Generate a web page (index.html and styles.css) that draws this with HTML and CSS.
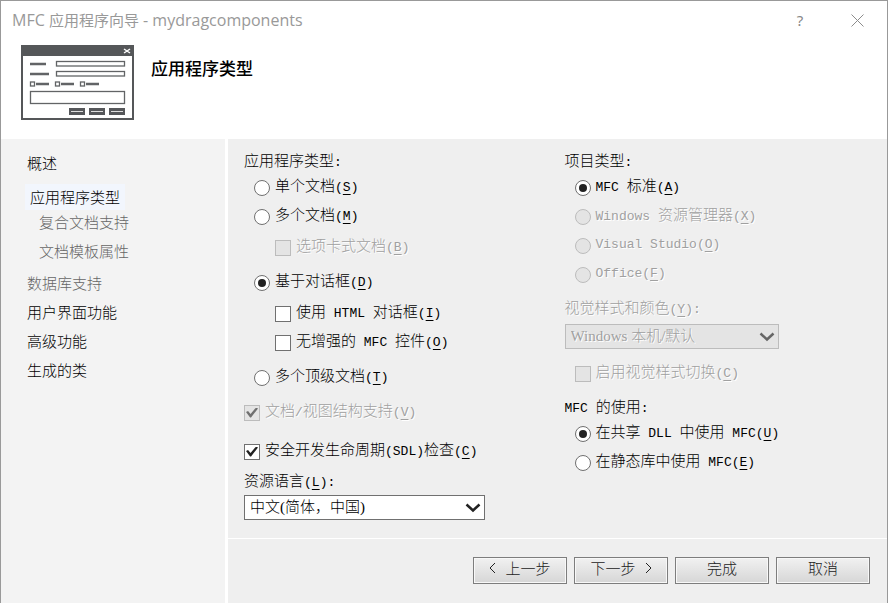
FILE: index.html
```html
<!DOCTYPE html>
<html lang="zh-CN">
<head>
<meta charset="utf-8">
<title>MFC 应用程序向导 - mydragcomponents</title>
<link rel="stylesheet" href="styles.css">
</head>
<body>
<div class="dialog">
  <header class="top">
    <div class="titlebar">
      <span class="caption">MFC <span class="zh">应用程序向导</span> - mydragcomponents</span>
      <button class="tool help" type="button" aria-label="帮助">?</button>
      <button class="tool" type="button" aria-label="关闭">
        <svg width="13" height="13" viewBox="0 0 13 13"><path d="M.5 .5l12 12M12.500 .5l-12 12" stroke="#8c8c8c" fill="none"/></svg>
      </button>
    </div>
    <div class="banner">
      <svg width="113" height="75" viewBox="0 0 113 75" aria-hidden="true">
        <rect x="1" y="1" width="111" height="73" fill="#fff" stroke="#555759" stroke-width="2"/>
        <rect width="113" height="11" fill="#555759"/>
        <path d="M103 4l6 4M109 4l-6 4" stroke="#fff" stroke-width="1.500"/>
        <path d="M9 19h16M9 29h19M15 39h13M40 39h13M65 39h13" stroke="#626466" stroke-width="2.500"/>
        <g fill="#fff" stroke="#626466" stroke-width="1.300">
          <rect x="35.500" y="16.500" width="68" height="4.500"/>
          <rect x="35.500" y="26.500" width="68" height="4.500"/>
          <rect x="9.500" y="37" width="4" height="4"/>
          <rect x="34.500" y="37" width="4" height="4"/>
          <rect x="59.500" y="37" width="4" height="4"/>
          <rect x="9.500" y="46.500" width="94" height="12"/>
        </g>
        <g fill="#55575a"><rect x="48" y="63" width="16" height="7"/><rect x="68" y="63" width="16" height="7"/><rect x="88" y="63" width="16" height="7"/></g>
        <path d="M50 66.500h12M70 66.500h12M90 66.500h12" stroke="#ddd"/>
      </svg>
      <h1>应用程序类型</h1>
    </div>
  </header>

  <div class="body">
    <nav class="side">
      <a href="#" class="item">概述</a>
      <a href="#" class="item active">应用程序类型</a>
      <a href="#" class="item sub">复合文档支持</a>
      <a href="#" class="item sub">文档模板属性</a>
      <a href="#" class="item off">数据库支持</a>
      <a href="#" class="item">用户界面功能</a>
      <a href="#" class="item">高级功能</a>
      <a href="#" class="item">生成的类</a>
    </nav>

    <form class="main">
      <div class="columns">
        <section>
          <div class="label">应用程序类型<span class="en">:</span></div>
          <label class="row in"><input type="radio" name="app"><span>单个文档<span class="en">(<u>S</u>)</span></span></label>
          <label class="row in"><input type="radio" name="app"><span>多个文档<span class="en">(<u>M</u>)</span></span></label>
          <label class="row deep off gap-s"><input type="checkbox" disabled><span>选项卡式文档<span class="en">(<u>B</u>)</span></span></label>
          <label class="row in gap-m"><input type="radio" name="app" checked><span>基于对话框<span class="en">(<u>D</u>)</span></span></label>
          <label class="row deep gap-s"><input type="checkbox"><span>使用<span class="en"> HTML </span>对话框<span class="en">(<u>I</u>)</span></span></label>
          <label class="row deep"><input type="checkbox"><span>无增强的<span class="en"> MFC </span>控件<span class="en">(<u>O</u>)</span></span></label>
          <label class="row in gap-m"><input type="radio" name="app"><span>多个顶级文档<span class="en">(<u>T</u>)</span></span></label>
          <label class="row off gap-m"><input type="checkbox" checked disabled><span>文档<span class="en">/</span>视图结构支持<span class="en">(<u>V</u>)</span></span></label>
          <label class="row gap-l"><input type="checkbox" checked><span>安全开发生命周期<span class="en">(SDL)</span>检查<span class="en">(<u>C</u>)</span></span></label>
          <label class="label gap-s" for="lang">资源语言<span class="en">(<u>L</u>):</span></label>
          <div class="combo wide">
            <select id="lang"><option>中文(简体，中国)</option></select>
            <svg width="16" height="10" viewBox="0 0 16 10"><path d="M1.500 1.500L8 7.500l6.500-6" fill="none" stroke="#222" stroke-width="2.500"/></svg>
          </div>
        </section>
        <section>
          <div class="label">项目类型<span class="en">:</span></div>
          <label class="row in"><input type="radio" name="proj" checked><span><span class="en">MFC </span>标准<span class="en">(<u>A</u>)</span></span></label>
          <label class="row in off"><input type="radio" name="proj" disabled><span><span class="en">Windows </span>资源管理器<span class="en">(<u>X</u>)</span></span></label>
          <label class="row in off"><input type="radio" name="proj" disabled><span class="en">Visual Studio(<u>O</u>)</span></label>
          <label class="row in off"><input type="radio" name="proj" disabled><span class="en">Office(<u>F</u>)</span></label>
          <label class="label off gap-m" for="style">视觉样式和颜色<span class="en">(<u>Y</u>):</span></label>
          <div class="combo off">
            <select id="style" disabled><option>Windows 本机/默认</option></select>
            <svg width="16" height="10" viewBox="0 0 16 10"><path d="M1.500 1.500L8 7.500l6.500-6" fill="none" stroke="#666" stroke-width="2.500"/></svg>
          </div>
          <label class="row in off gap-l"><input type="checkbox" disabled><span>启用视觉样式切换<span class="en">(<u>C</u>)</span></span></label>
          <div class="label gap-m"><span class="en">MFC </span>的使用<span class="en">:</span></div>
          <label class="row in"><input type="radio" name="use" checked><span>在共享<span class="en"> DLL </span>中使用<span class="en"> MFC(<u>U</u>)</span></span></label>
          <label class="row in"><input type="radio" name="use"><span>在静态库中使用<span class="en"> MFC(<u>E</u>)</span></span></label>
        </section>
      </div>
      <footer class="actions">
        <button type="button"><svg width="7" height="12" viewBox="0 0 7 12"><path d="M6 1L1 6l5 5" fill="none" stroke="#222"/></svg>上一步</button>
        <button type="button">下一步<svg width="7" height="12" viewBox="0 0 7 12"><path d="M1 1l5 5-5 5" fill="none" stroke="#222"/></svg></button>
        <button type="button">完成</button>
        <button type="button">取消</button>
      </footer>
    </form>
  </div>
</div>
</body>
</html>
```
FILE: styles.css
```css
* { box-sizing: border-box; }
body {
  margin: 0;
  font: 300 15px/20px "Noto Sans CJK SC", sans-serif;
  color: #000;
}
.dialog {
  min-height: 100vh;
  display: flex;
  flex-direction: column;
  border: 1px solid #999;
  border-bottom: 0;
  background: #fff;
}
.top { height: 138px; }
.titlebar {
  display: flex;
  align-items: center;
  height: 38px;
  padding: 0 22px 0 11px;
  color: #999;
}
.caption {
  flex: 1;
  font: 16px/20px "Open Sans", "Noto Sans CJK SC", sans-serif;
}
.zh { font-size: 15px; }
.tool {
  display: flex;
  justify-content: center;
  align-items: center;
  width: 16px;
  height: 16px;
  padding: 0;
  border: 0;
  background: none;
  color: #888;
  font: 15px/16px "Noto Sans", sans-serif;
}
.help { margin-right: 41px; }
.banner {
  display: flex;
  align-items: flex-start;
  gap: 17px;
  padding: 6px 20px 0;
}
h1 {
  margin: 11px 0 0;
  font-size: 17px;
  line-height: 24px;
  font-weight: 500;
}
.body {
  flex: 1;
  display: flex;
  gap: 3px;
}
.side {
  display: flex;
  flex-direction: column;
  align-items: flex-start;
  width: 224px;
  padding: 9px 24px 0;
  background: #f3f3f3;
}
.item {
  padding: 0 2px;
  line-height: 29px;
  color: #000;
  text-decoration: none;
}
.item.active {
  margin-top: 7px;
  padding: 0 5px;
  line-height: 26px;
  background: #f2f6fd;
}
.item.sub {
  margin-bottom: 6px;
  padding-left: 14px;
  line-height: 23px;
}
.item.sub, .item.off { color: #666; }
.main {
  flex: 1;
  display: flex;
  flex-direction: column;
  background: #efefef;
}
.columns {
  flex: 1;
  display: grid;
  grid-template-columns: 1fr 1fr;
  padding: 9px 2px 0 16px;
}
.label {
  display: block;
  line-height: 24px;
}
.row {
  display: flex;
  align-items: center;
  gap: 5px;
  height: 29px;
}
.row > span { padding-bottom: 2px; }
.in { padding-left: 10px; }
.deep { padding-left: 31px; }
.gap-s { margin-top: 2px; }
.gap-m { margin-top: 6px; }
.gap-l { margin-top: 10px; }
.en {
  font: 13px/20px "Liberation Mono", monospace;
  white-space: pre;
}
u { text-underline-offset: 3px; }
.off {
  color: #a0a0a0;
  text-shadow: 1px 1px #fff;
}
.item.off { text-shadow: none; }
input {
  appearance: none;
  display: grid;
  place-items: center;
  flex: none;
  width: 16px;
  height: 16px;
  margin: 0;
  border: 1px solid #707070;
  background: #fff;
}
input[type="radio"] { border-radius: 50%; }
input[type="radio"]:checked::before {
  content: "";
  width: 8px;
  height: 8px;
  border-radius: 50%;
  background: #222;
}
input[type="checkbox"]:checked::before {
  content: "";
  width: 12px;
  height: 10px;
  background: #222;
  clip-path: polygon(0 45%, 17% 35%, 38% 65%, 84% 0, 100% 10%, 42% 100%, 34% 100%);
}
input:disabled {
  border-color: #bcbcbc;
  background: #e4e4e4;
}
input[type="checkbox"]:disabled::before { background: #707070; }
.combo {
  display: grid;
  align-items: center;
  width: 214px;
  margin-top: 4px;
}
.combo.wide {
  width: 241px;
  margin-top: 2px;
}
.combo > * { grid-area: 1 / 1; }
.combo svg {
  justify-self: end;
  margin-right: 4px;
  pointer-events: none;
}
select {
  appearance: none;
  width: 100%;
  height: 25px;
  padding: 0 5px 2px;
  border: 1px solid #707070;
  border-radius: 0;
  background: #fff;
  color: #000;
  font: 300 15px/20px "Liberation Serif", "Noto Sans CJK SC", serif;
}
select:disabled {
  border-color: #bcbcbc;
  background: #e4e4e4;
  color: #a0a0a0;
  opacity: 1;
  text-shadow: 1px 1px #fff;
}
.actions {
  display: flex;
  justify-content: flex-end;
  gap: 7px;
  height: 65px;
  padding: 18px 17px 0 0;
  border-top: 1px solid #fff;
}
.actions button {
  display: flex;
  justify-content: center;
  align-items: center;
  gap: 9px;
  width: 94px;
  height: 27px;
  padding: 0 0 5px;
  border: 1px solid #7d7d7d;
  box-shadow: inset 0 0 0 1px #f8f8f8;
  background: linear-gradient(#f1f1f1, #d6d6d6);
  color: #222;
  font: 300 15px/20px "Noto Sans CJK SC", sans-serif;
}
```
